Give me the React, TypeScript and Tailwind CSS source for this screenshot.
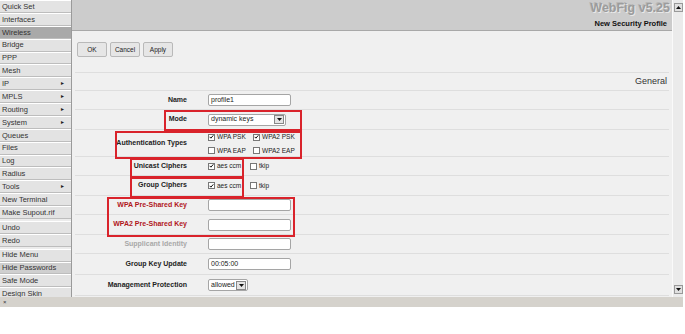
import React from "react";

const menu: { name: string; arrow?: boolean; sel?: string; gap?: boolean }[] = [
  { name: "Quick Set" },
  { name: "Interfaces" },
  { name: "Wireless", sel: "dark" },
  { name: "Bridge" },
  { name: "PPP" },
  { name: "Mesh" },
  { name: "IP", arrow: true },
  { name: "MPLS", arrow: true },
  { name: "Routing", arrow: true },
  { name: "System", arrow: true },
  { name: "Queues" },
  { name: "Files" },
  { name: "Log" },
  { name: "Radius" },
  { name: "Tools", arrow: true },
  { name: "New Terminal" },
  { name: "Make Supout.rif" },
  { name: "Undo", gap: true },
  { name: "Redo" },
  { name: "Hide Menu", gap: true },
  { name: "Hide Passwords", sel: "light" },
  { name: "Safe Mode" },
  { name: "Design Skin" },
];

function Check({ on, label }: { on?: boolean; label: string }) {
  return (
    <div className="flex items-center gap-[2px]">
      <span className="w-[7px] h-[7px] border border-[#777] bg-white flex items-center justify-center">
        {on && (
          <svg width="6" height="6" viewBox="0 0 6 6">
            <path d="M0.8 2.8 L2.3 4.4 L5.2 1" stroke="#111" strokeWidth="1.2" fill="none" />
          </svg>
        )}
      </span>
      <span className="text-[6.5px] text-[#222]">{label}</span>
    </div>
  );
}

function Input({ value, w = "w-[83px]" }: { value?: string; w?: string }) {
  return (
    <div className={`${w} h-[12px] bg-white border border-[#a5a5a5] rounded-[2px] px-[2px] text-[7px] leading-[10px] text-[#222]`}>
      {value}
    </div>
  );
}

function Select({ value, w }: { value: string; w: string }) {
  return (
    <div className={`${w} h-[12px] bg-white border border-[#a5a5a5] rounded-[2px] flex items-center justify-between pl-[2px] pr-[1px]`}>
      <span className="text-[7px] text-[#222]">{value}</span>
      <span className="w-[10px] h-[9px] bg-[#e4e4e4] border border-[#888] flex items-center justify-center">
        <svg width="5" height="3" viewBox="0 0 5 3">
          <path d="M0 0 H5 L2.5 3 Z" fill="#111" />
        </svg>
      </span>
    </div>
  );
}

function Row({ label, h, color = "text-[#222]", children }: { label: string; h: string; color?: string; children?: React.ReactNode }) {
  return (
    <div className={`flex items-center ${h} mx-[3px] border-b border-[#dedede]`}>
      <div className={`w-[112px] text-right text-[7px] font-bold ${color}`}>{label}</div>
      <div className="ml-[21px]">{children}</div>
    </div>
  );
}

export default function App() {
  return (
    <div className="w-[683px] bg-white font-['Liberation_Sans',Arial,sans-serif]">
      <div className="flex h-[297px] overflow-hidden">
        <aside className="w-[72px] shrink-0 border-r border-[#9a9a9a] bg-[#ececec]">
          {menu.map((m) => (
            <div
              key={m.name}
              className={`${m.gap ? "mt-[2px]" : ""} h-[12.875px] flex items-center justify-between pl-[2px] pr-[6px] border-b border-[#bdbdbd] border-t border-t-white ${
                m.sel === "dark" ? "bg-[#a9a9a9]" : m.sel === "light" ? "bg-[#cfcfcf]" : "bg-[#e3e3e3]"
              }`}
            >
              <span className="text-[7.5px] text-[#333]">{m.name}</span>
              {m.arrow && <span className="text-[5px] text-[#222]">►</span>}
            </div>
          ))}
        </aside>

        <main className="relative w-[600px] shrink-0 bg-[#f0f0f0]">
          <div className="h-[31px] bg-[#cccccc] border-b border-[#a8a8a8] flex flex-col items-end pr-[2px]">
            <div className="text-[12.5px] font-bold text-[#9c9c9c] leading-[14px] mt-[1px] [text-shadow:1px_1px_0_#e8e8e8,-1px_-1px_0_#b8b8b8]">WebFig v5.25</div>
            <div className="text-[7.5px] font-bold text-[#111] mt-[3px] mr-[3px]">New Security Profile</div>
          </div>

          <div className="flex gap-[3px] pl-[5px] pt-[11px] h-[41px]">
            {["OK", "Cancel", "Apply"].map((b) => (
              <div key={b} className="w-[30px] h-[15px] bg-[#e6e6e6] border border-[#b9b9b9] rounded-[2px] flex items-center justify-center text-[6.5px] text-[#222]">
                {b}
              </div>
            ))}
          </div>

          <div className="h-[19px] mx-[3px] border-t border-b border-[#dedede] flex items-center justify-end pr-[2px]">
            <span className="text-[9px] text-[#333]">General</span>
          </div>

          <Row label="Name" h="h-[19px]">
            <Input value="profile1" />
          </Row>
          <Row label="Mode" h="h-[20px]">
            <Select value="dynamic keys" w="w-[78px]" />
          </Row>
          <Row label="Authentication Types" h="h-[27px]">
            <div className="grid grid-cols-[45px_50px] gap-y-[4px] pt-[2px]">
              <Check on label="WPA PSK" />
              <Check on label="WPA2 PSK" />
              <Check label="WPA EAP" />
              <Check label="WPA2 EAP" />
            </div>
          </Row>
          <Row label="Unicast Ciphers" h="h-[19px]">
            <div className="grid grid-cols-[42px_30px]">
              <Check on label="aes ccm" />
              <Check label="tkip" />
            </div>
          </Row>
          <Row label="Group Ciphers" h="h-[20px]">
            <div className="grid grid-cols-[42px_30px]">
              <Check on label="aes ccm" />
              <Check label="tkip" />
            </div>
          </Row>
          <Row label="WPA Pre-Shared Key" h="h-[19px]" color="text-[#b0171c]">
            <Input />
          </Row>
          <Row label="WPA2 Pre-Shared Key" h="h-[20px]" color="text-[#b0171c]">
            <Input />
          </Row>
          <Row label="Supplicant Identity" h="h-[19px]" color="text-[#a8a8a8]">
            <Input />
          </Row>
          <Row label="Group Key Update" h="h-[21px]">
            <Input value="00:05:00" />
          </Row>
          <Row label="Management Protection" h="h-[21px]">
            <Select value="allowed" w="w-[40px]" />
          </Row>

          {/* red annotation boxes */}
          <div className="absolute left-[92px] top-[110px] w-[138px] h-[21px] border-2 border-[#d9232b]" />
          <div className="absolute left-[43px] top-[131px] w-[187px] h-[28px] border-2 border-[#d9232b]" />
          <div className="absolute left-[58px] top-[158px] w-[114px] h-[20px] border-2 border-[#d9232b]" />
          <div className="absolute left-[58px] top-[177px] w-[114px] h-[21px] border-2 border-[#d9232b]" />
          <div className="absolute left-[35px] top-[197px] w-[188px] h-[40px] border-2 border-[#d9232b]" />
        </main>

        <div className="w-[11px] shrink-0 bg-[#ebebeb] border-l border-[#fafafa] flex flex-col justify-between items-center py-[3px]">
          <span className="w-[9px] h-[9px] bg-[#e0e0e0] border border-[#999] flex items-center justify-center">
            <svg width="5" height="3" viewBox="0 0 5 3"><path d="M0 3 H5 L2.5 0 Z" fill="#111" /></svg>
          </span>
          <span className="w-[9px] h-[9px] bg-[#e0e0e0] border border-[#999] flex items-center justify-center">
            <svg width="5" height="3" viewBox="0 0 5 3"><path d="M0 0 H5 L2.5 3 Z" fill="#111" /></svg>
          </span>
        </div>
      </div>
      <div className="h-[10px] bg-[#d5d2cc] flex items-center pl-[3px]">
        <span className="text-[6px] text-[#333]">×</span>
      </div>
    </div>
  );
}
